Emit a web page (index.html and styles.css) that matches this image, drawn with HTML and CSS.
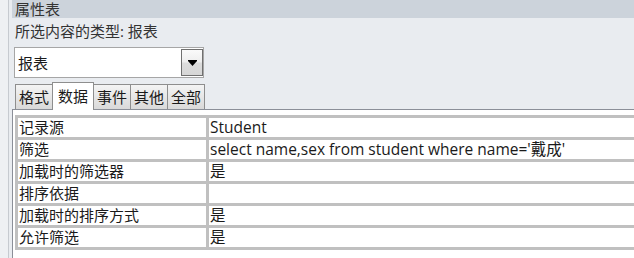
FILE: index.html
```html
<!DOCTYPE html>
<html lang="zh">
<head>
<meta charset="utf-8">
<title>属性表</title>
<link rel="stylesheet" href="styles.css">
</head>
<body>
<div class="app">
  <div class="rail"></div>
  <div class="sheet">
    <div class="title">属性表</div>
    <div class="sel-label">所选内容的类型: 报表</div>
    <div class="combo">
      <span class="combo-text">报表</span>
      <span class="combo-btn">
        <svg width="9" height="6" viewBox="0 0 9 6"><polygon points="0,0 9,0 9,1 4.5,6 0,1" fill="#000"/></svg>
      </span>
    </div>
    <div class="tabs">
      <div class="tab">格式</div>
      <div class="tab active">数据</div>
      <div class="tab">事件</div>
      <div class="tab">其他</div>
      <div class="tab">全部</div>
    </div>
    <div class="panel">
      <div class="grid">
        <div class="cell">记录源</div><div class="cell val">Student</div>
        <div class="cell">筛选</div><div class="cell val">select name,sex from student where name='戴成'</div>
        <div class="cell">加载时的筛选器</div><div class="cell val">是</div>
        <div class="cell">排序依据</div><div class="cell val"></div>
        <div class="cell">加载时的排序方式</div><div class="cell val">是</div>
        <div class="cell">允许筛选</div><div class="cell val">是</div>
      </div>
    </div>
  </div>
</div>
</body>
</html>
```

FILE: styles.css
```css
html, body {
  margin: 0;
  padding: 0;
}
body {
  background: #e9ecf0;
  font-family: "Open Sans", "Noto Sans CJK SC", sans-serif;
  color: #1a1a1a;
  overflow: hidden;
}
.app {
  display: flex;
  height: 258px;
  overflow: hidden;
}
.rail {
  width: 8px;
  flex: none;
  background: #eef0f3;
  border-right: 1px solid #c6cad0;
  margin-right: 3px;
}
.sheet {
  flex: 1;
  min-width: 0;
  display: flex;
  flex-direction: column;
}
.title {
  height: 18px;
  line-height: 18px;
  background: #ccd3db;
  padding-left: 3px;
  font-size: 15px;
  color: #333;
}
.sel-label {
  margin-top: 3px;
  padding-left: 3px;
  line-height: 20px;
  height: 20px;
  font-size: 15px;
  color: #333;
}
.combo {
  margin-top: 6px;
  margin-left: 2px;
  width: 188px;
  height: 29px;
  border: 1px solid #a6a6a6;
  background: #fff;
  display: flex;
  align-items: center;
}
.combo-text {
  flex: 1;
  padding-left: 3px;
  font-size: 15px;
  line-height: 20px;
}
.combo-btn {
  width: 20px;
  height: 25px;
  border: 1px solid #707070;
  background: linear-gradient(#fafafa 0%, #eeeeee 48%, #dcdcdc 52%, #d6d6d6 100%);
  display: flex;
  align-items: center;
  justify-content: center;
}
.tabs {
  margin-top: 4px;
  margin-left: 3px;
  height: 27px;
  display: flex;
  align-items: flex-end;
  position: relative;
  z-index: 1;
}
.tab {
  height: 24px;
  line-height: 24px;
  padding: 0 3px;
  border: 1px solid #8e8e8e;
  border-bottom: none;
  margin-left: -1px;
  background: linear-gradient(#f4f4f4, #d9d9d9);
  font-size: 15px;
}
.tab:first-child {
  margin-left: 0;
}
.tab.active {
  height: 27px;
  line-height: 26px;
  padding: 0 5px;
  background: #fff;
  margin-bottom: -1px;
  position: relative;
  z-index: 2;
}
.panel {
  flex: 1;
  border-top: 1px solid #8b8f98;
  border-left: 1px solid #8b8f98;
  background: #fff;
  padding: 5px 0 0 2px;
}
.grid {
  display: grid;
  grid-template-columns: 188px 1fr;
  grid-auto-rows: 19px;
  gap: 3px;
  padding: 3px 0 3px 3px;
  background: #c0c0c0;
}
.cell {
  background: #fff;
  padding-left: 1px;
  font-size: 15px;
  line-height: 19px;
  white-space: nowrap;
}
.cell.val {
  font-size: 15.5px;
}
```
